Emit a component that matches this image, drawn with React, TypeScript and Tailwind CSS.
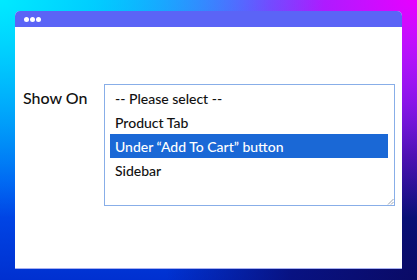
const options = ['-- Please select --', 'Product Tab', 'Under “Add To Cart” button', 'Sidebar'];

const ResizeGrip = () => (
  <svg width="7" height="7" viewBox="0 0 7 7" className="text-gray-400">
    <path d="M6.5 1 L1 6.5 M6.5 4 L4 6.5" stroke="currentColor" strokeWidth="1" />
  </svg>
);

export default function App() {
  const selected = 2;

  return (
    <div className="w-[417px] h-[280px] overflow-hidden pt-[11px] px-[15px] bg-[radial-gradient(ellipse_at_0%_0%,#00eaff_0%,rgba(0,220,255,0.6)_25%,transparent_55%),radial-gradient(ellipse_at_100%_0%,#e800ff_0%,rgba(200,0,255,0.7)_25%,transparent_55%),radial-gradient(circle_at_100%_100%,#0a0a66_0%,rgba(10,10,110,0.8)_25%,transparent_50%),linear-gradient(to_bottom,#0090ff_0%,#0050f0_65%,#0030d0_100%)] font-['Lato',sans-serif]">
      <div className="flex flex-col h-[258px] rounded-t-[5px] overflow-hidden bg-white border-b border-[#a8b0f0]">
        <div className="flex items-center gap-[1px] h-4 shrink-0 px-[9px] bg-[#5b64f6]">
          <span className="w-[5px] h-[5px] rounded-full bg-white" />
          <span className="w-[5px] h-[5px] rounded-full bg-white" />
          <span className="w-[5px] h-[5px] rounded-full bg-white" />
        </div>
        <div className="flex pt-[57px] pl-2">
          <div className="w-[81px] pt-[2px] text-[16px] leading-[24px] font-medium text-[#111]">Show On</div>
          <div className="flex flex-col w-[291px] h-[122px] border border-[#88aee8] pt-[1px] pl-[5px] pr-[6px]">
            {options.map((o, i) => (
              <div
                key={o}
                className={`h-6 flex items-center pl-[5px] text-[14px] font-medium ${
                  i === selected ? 'bg-[#1a68d6] text-white' : 'text-[#111]'
                }`}
              >
                {o}
              </div>
            ))}
            <div className="flex-1 flex items-end justify-end -mr-[6px]">
              <ResizeGrip />
            </div>
          </div>
        </div>
      </div>
    </div>
  );
}
